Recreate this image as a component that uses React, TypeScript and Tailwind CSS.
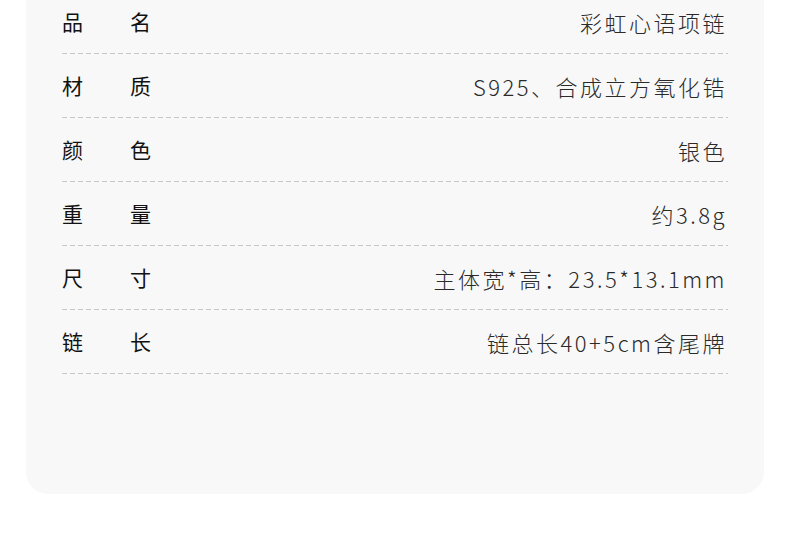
const rows: { label: [string, string]; value: string }[] = [
  { label: ["品", "名"], value: "彩虹心语项链" },
  { label: ["材", "质"], value: "S925、合成立方氧化锆" },
  { label: ["颜", "色"], value: "银色" },
  { label: ["重", "量"], value: "约3.8g" },
  { label: ["尺", "寸"], value: "主体宽*高：23.5*13.1mm" },
  { label: ["链", "长"], value: "链总长40+5cm含尾牌" },
];

const App = () => {
  return (
    <div className="w-[790px] h-[559px] bg-white overflow-hidden font-['Noto_Sans_CJK_SC',sans-serif]">
      <div className="mx-[26px] -mt-[10px] bg-[#f8f8f8] rounded-b-[22px] px-[36px] pb-[120px]">
        {rows.map((row) => (
          <div key={row.value}>
            <div className="h-[63px] flex items-center justify-between">
              <div className="w-[89px] flex justify-between text-[21px] text-[#111] leading-none">
                <span>{row.label[0]}</span>
                <span>{row.label[1]}</span>
              </div>
              <span className="text-[22px] font-extralight tracking-[2.5px] text-[#2a2a2a] leading-none mr-[1px]">
                {row.value}
              </span>
            </div>
            <div className="h-px bg-[linear-gradient(to_right,#c6c6cc_5px,transparent_5px)] bg-[length:8px_1px] bg-repeat-x" />
          </div>
        ))}
      </div>
    </div>
  );
};

export default App;
